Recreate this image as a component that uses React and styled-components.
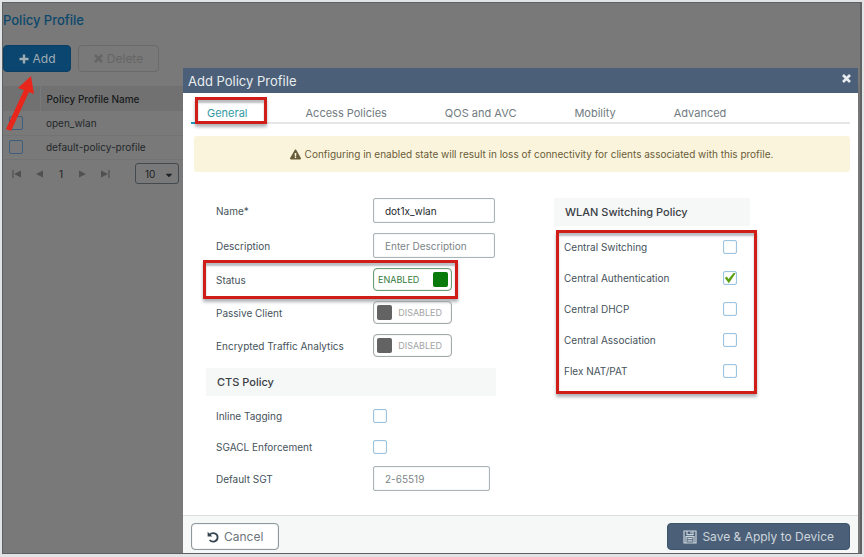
import React, { useState } from 'react'
import styled, { createGlobalStyle } from 'styled-components'
import { FaExclamationTriangle, FaCaretDown } from 'react-icons/fa'

const GlobalStyle = createGlobalStyle`
  * {
    box-sizing: border-box;
  }
  body {
    margin: 0;
    font-family: Inter, 'Liberation Sans', sans-serif;
    font-size: 10px;
    color: #45525a;
  }
  button, input, select {
    font-family: inherit;
    font-size: inherit;
    color: inherit;
  }
`

const Frame = styled.div`
  min-height: 100vh;
  padding: 2px 2px 3px 2px;
  background-color: #e2e3e4;
  display: flex;
`

const Screen = styled.div`
  position: relative;
  flex: 1;
  min-width: 0;
  border: 1px solid #5f6263;
  border-right-width: 2px;
  background-color: #797979;
`

const PageTitle = styled.h1`
  margin: 0;
  padding-top: 8px;
  font-size: 13px;
  font-weight: 500;
  line-height: 18px;
  color: #0c486c;
`

const Toolbar = styled.div`
  display: flex;
  gap: 7px;
  margin-top: 16px;
`

const ToolButton = styled.button`
  display: flex;
  align-items: center;
  justify-content: center;
  gap: 4px;
  height: 27px;
  width: ${props => props.$wide ? '81px' : '68px'};
  border: 1px solid ${props => props.$primary ? '#0b3f64' : '#6a6a6a'};
  border-radius: 4px;
  background-color: ${props => props.$primary ? '#0a4670' : 'transparent'};
  color: ${props => props.$primary ? '#a0acb3' : '#656565'};
  font-size: 12px;
  cursor: pointer;
`

const ProfileTable = styled.table`
  width: 100%;
  margin-top: 14px;
  border-collapse: collapse;
  color: #23282b;
`

const HeadCell = styled.th`
  height: 25px;
  padding: 0 6px;
  background-color: #717171;
  border-right: 1px solid #797979;
  font-weight: 500;
  text-align: left;
  color: #191b1c;
  width: ${props => props.$narrow ? '37px' : 'auto'};
`

const Cell = styled.td`
  height: 24px;
  padding: 0 6px;
  border-bottom: 1px solid #737373;
`

const Check = styled.input`
  appearance: none;
  display: block;
  flex: none;
  width: 14px;
  height: 14px;
  margin: 0;
  border: 1px solid ${props => props.$dim ? '#3d5e7c' : '#9cc3e0'};
  border-radius: 2px;
  background-color: ${props => props.$dim ? 'transparent' : '#fff'};
  box-shadow: ${props => props.$dim ? 'none' : 'inset 0 0 1px #9cc3e0'};
`

const Pager = styled.div`
  display: flex;
  align-items: center;
  height: 28px;
  padding-left: 3px;
  color: #1c2226;
`

const PagerButton = styled.button`
  display: flex;
  justify-content: center;
  padding: 0;
  width: 22px;
  border: 0;
  background: none;
  color: #515151;
`

const PageNumber = styled.span`
  width: 22px;
  text-align: center;
  line-height: 20px;
`

const SizeBox = styled.div`
  position: relative;
  margin-left: 19px;
  svg {
    position: absolute;
    right: 5px;
    top: 7px;
    pointer-events: none;
  }
`

const SizeSelect = styled.select`
  appearance: none;
  display: block;
  width: 44px;
  height: 21px;
  padding: 0 9px;
  border: 1px solid #43494d;
  border-radius: 3px;
  background: transparent;
`

const Pointer = styled.svg`
  position: absolute;
  left: 0;
  top: 70px;
`

const Dialog = styled.section`
  position: absolute;
  left: 180px;
  right: 2px;
  top: 65px;
  bottom: 0;
  display: flex;
  flex-direction: column;
  background-color: #fff;
`

const DialogHeader = styled.header`
  display: flex;
  align-items: center;
  justify-content: space-between;
  height: 25px;
  padding: 0 7px 0 5px;
  background-color: #4b6078;
  color: #e8ecef;
`

const DialogTitle = styled.h2`
  margin: 0;
  font-size: 13px;
  font-weight: 400;
`

const CloseButton = styled.button`
  display: flex;
  padding: 0 0 4px;
  border: 0;
  background: none;
  font-size: 11px;
`

const Tabs = styled.nav`
  display: flex;
  gap: 26px;
  height: 31px;
  margin: 0 8px;
  border-bottom: 2px solid #e4e6e7;
`

const Tab = styled.a`
  position: relative;
  display: flex;
  align-items: center;
  height: 31px;
  padding: 10px 16px 0;
  border-bottom: 2px solid ${props => props.$active ? '#1c9bc4' : 'transparent'};
  font-size: 11px;
  text-decoration: none;
  color: ${props => props.$active ? '#3299a5' : '#717b80'};
`

const Highlight = styled.span`
  position: absolute;
  inset: ${props => props.$inset};
  border: 3px solid #cf1e17;
  box-shadow: 0 3px 3px rgba(60, 70, 80, 0.4), inset 0 3px 2px rgba(60, 70, 80, 0.35);
  pointer-events: none;
`

const Warning = styled.p`
  display: flex;
  align-items: center;
  justify-content: center;
  gap: 4px;
  height: 36px;
  margin: 12px 8px 0 11px;
  padding-left: 19px;
  border-radius: 3px;
  background-color: #fbf4dd;
  color: #695c38;
`

const Body = styled.div`
  flex: 1;
  display: grid;
  grid-template-columns: minmax(0, 290fr) minmax(0, 196fr);
  column-gap: 58px;
  align-content: start;
  padding: 21px 16% 20px 23px;
`

const Row = styled.div`
  position: relative;
  display: flex;
  align-items: center;
  height: ${props => props.$height}px;
  padding-left: 10px;
`

const Label = styled.label`
  width: 157px;
  flex: none;
`

const Field = styled.input`
  flex: 1;
  min-width: 0;
  max-width: ${props => props.$short ? '117px' : '122px'};
  height: 25px;
  margin-right: 1px;
  padding: 0 11px;
  border: 1px solid #aab4b8;
  border-radius: 2px;
  background-color: #fff;
  box-shadow: inset 0 0 1px #aab4b8;
  color: #22282b;
  &::placeholder {
    color: #7b8589;
    opacity: 1;
  }
`

const SwitchBox = styled.span`
  display: flex;
  flex-direction: ${props => props.$on ? 'row-reverse' : 'row'};
  align-items: center;
  justify-content: space-between;
  width: 79px;
  height: 23px;
  padding: ${props => props.$on ? '0 3px 0 4px' : '0 9px 0 3px'};
  border: 1px solid ${props => props.$on ? '#6c9b74' : '#a3a8aa'};
  border-radius: 4px;
  box-shadow: inset 0 0 1px ${props => props.$on ? '#6c9b74' : '#a3a8aa'};
  font-size: 9px;
  color: ${props => props.$on ? '#357b3d' : '#a2a4a5'};
`

const SwitchKnob = styled.input`
  appearance: none;
  width: 15px;
  height: 15px;
  margin: 0;
  border-radius: 2px;
  background-color: ${props => props.checked ? '#087b0a' : '#636363'};
`

const SectionTitle = styled.h3`
  margin: ${props => props.$spaced ? '6px 0 4px' : '5px 0'};
  padding-left: 11px;
  background-color: #f6f7f7;
  font-size: 11px;
  font-weight: 500;
  line-height: 28px;
  color: #3a4145;
`

const PolicyList = styled.div`
  position: relative;
  padding: 0 13px 8px 0;
`

const PolicyRow = styled(Row)`
  justify-content: space-between;
`

const Tick = styled.span`
  position: relative;
  display: block;
  svg {
    position: absolute;
    left: 0;
    top: 0;
    pointer-events: none;
  }
`

const DialogFooter = styled.footer`
  display: flex;
  align-items: center;
  justify-content: space-between;
  height: 38px;
  padding: 4px 8px 0;
  border-top: 1px solid #dcdede;
  background-color: #f6f7f7;
`

const ActionButton = styled.button`
  display: flex;
  align-items: center;
  justify-content: center;
  gap: 5px;
  height: 27px;
  padding: 0 15px;
  border: 1px solid ${props => props.$primary ? '#40566d' : '#8d979c'};
  border-radius: 4px;
  background-color: ${props => props.$primary ? '#4b6078' : '#fff'};
  box-shadow: inset 0 0 1px ${props => props.$primary ? '#40566d' : '#8d979c'};
  color: ${props => props.$primary ? '#cdd5dc' : '#6b757b'};
  font-size: 12px;
`

const profiles = ['open_wlan', 'default-policy-profile']
const tabs = ['General', 'Access Policies', 'QOS and AVC', 'Mobility', 'Advanced']

const PlusIcon = () => (
  <svg width="10" height="10" viewBox="0 0 10 10" fill="none" stroke="currentColor" strokeWidth="2.4">
    <path d="M5 .5v9M.5 5h9" />
  </svg>
)

const CrossIcon = () => (
  <svg width="9" height="9" viewBox="0 0 9 9" fill="none" stroke="currentColor" strokeWidth="2.6">
    <path d="M1 1l7 7M8 1 1 8" />
  </svg>
)

const UndoIcon = () => (
  <svg width="12" height="12" viewBox="0 0 12 12" fill="none" stroke="#35444f" strokeWidth="1.8">
    <path d="M2.6 3.6C5.4.8 10.6 2 10.6 6.2c0 4.4-5 5.8-8 3" />
    <path d="M.6.8 5.4 5.4H.6Z" fill="#35444f" stroke="none" />
  </svg>
)

const PageArrow = ({ back, end }) => (
  <svg width="10" height="10" viewBox="0 0 10 10" fill="currentColor">
    <g transform={back ? 'matrix(-1 0 0 1 10 0)' : undefined}>
      <path d="M1 1.5 8 5 1 8.5Z" />
      {end && <path d="M8.4 1h1.2v8H8.4Z" />}
    </g>
  </svg>
)

const SaveIcon = () => (
  <svg width="14" height="14" viewBox="0 0 14 14" fill="none" stroke="currentColor" strokeWidth="1.2">
    <path d="M1 1h12v12H1Z" />
    <path d="M4 1v3.6h6V1M8 1.6v2" />
    <path d="M3 13V6.6h8V13M4.5 8.7h5M4.5 10.8h5" />
  </svg>
)

const PolicyCheck = ({ id, label, initial }) => {
  const [checked, setChecked] = useState(initial)
  return (
    <PolicyRow $height={31}>
      <label htmlFor={id}>{label}</label>
      <Tick>
        <Check id={id} type="checkbox" checked={checked} onChange={() => setChecked(!checked)} />
        {checked && (
          <svg width="14" height="14" viewBox="0 0 14 14">
            <path d="M1.8 7 3.8 5.6 5.5 8 10.8 1.8 12.6 2.2 5.9 12.2Z" fill="#5da016" />
          </svg>
        )}
      </Tick>
    </PolicyRow>
  )
}

const SwitchRow = ({ id, label, initial, marked }) => {
  const [on, setOn] = useState(initial)
  return (
    <Row $height={33}>
      <Label htmlFor={id}>{label}</Label>
      <SwitchBox $on={on}>
        <SwitchKnob id={id} type="checkbox" checked={on} onChange={() => setOn(!on)} />
        <span>{on ? 'ENABLED' : 'DISABLED'}</span>
      </SwitchBox>
      {marked && <Highlight $inset="-3px 38px -3px -3px" />}
    </Row>
  )
}

export default function App() {
  const [tab, setTab] = useState('General')
  return (
    <Frame>
      <GlobalStyle />
      <Screen>
        <PageTitle>Policy Profile</PageTitle>
        <Toolbar>
          <ToolButton $primary><PlusIcon />Add</ToolButton>
          <ToolButton $wide><CrossIcon />Delete</ToolButton>
        </Toolbar>
        <ProfileTable>
          <thead>
            <tr>
              <HeadCell $narrow />
              <HeadCell>Policy Profile Name</HeadCell>
            </tr>
          </thead>
          <tbody>
            {profiles.map(name => (
              <tr key={name}>
                <Cell><Check $dim type="checkbox" aria-label={name} /></Cell>
                <Cell>{name}</Cell>
              </tr>
            ))}
          </tbody>
        </ProfileTable>
        <Pager>
          <PagerButton aria-label="First page"><PageArrow back end /></PagerButton>
          <PagerButton aria-label="Previous page"><PageArrow back /></PagerButton>
          <PageNumber>1</PageNumber>
          <PagerButton aria-label="Next page"><PageArrow /></PagerButton>
          <PagerButton aria-label="Last page"><PageArrow end /></PagerButton>
          <SizeBox>
            <SizeSelect aria-label="Items per page" defaultValue="10">
              <option>10</option>
              <option>20</option>
            </SizeSelect>
            <FaCaretDown size={10} />
          </SizeBox>
        </Pager>
        <Pointer width="40" height="64" viewBox="0 0 40 64">
          <path d="M28 3 31 21 26 19 8 58 3 56 21 17 15 15Z" fill="#e9261b" />
        </Pointer>

        <Dialog role="dialog" aria-labelledby="dialog-title">
          <DialogHeader>
            <DialogTitle id="dialog-title">Add Policy Profile</DialogTitle>
            <CloseButton aria-label="Close"><CrossIcon /></CloseButton>
          </DialogHeader>
          <Tabs>
            {tabs.map(name => (
              <Tab key={name} href="#" $active={name === tab} onClick={() => setTab(name)}>
                {name}
                {name === 'General' && <Highlight $inset="4px -3px -2px 4px" />}
              </Tab>
            ))}
          </Tabs>
          <Warning>
            <FaExclamationTriangle size={11} />
            Configuring in enabled state will result in loss of connectivity for clients associated with this profile.
          </Warning>
          <Body>
            <div>
              <Row $height={35}>
                <Label htmlFor="name">Name*</Label>
                <Field id="name" defaultValue="dot1x_wlan" />
              </Row>
              <Row $height={35}>
                <Label htmlFor="description">Description</Label>
                <Field id="description" placeholder="Enter Description" />
              </Row>
              <SwitchRow id="status" label="Status" initial={true} marked />
              <SwitchRow id="passive" label="Passive Client" initial={false} />
              <SwitchRow id="eta" label="Encrypted Traffic Analytics" initial={false} />
              <SectionTitle $spaced>CTS Policy</SectionTitle>
              <Row $height={31}>
                <Label htmlFor="tagging">Inline Tagging</Label>
                <Check id="tagging" type="checkbox" />
              </Row>
              <Row $height={31}>
                <Label htmlFor="sgacl">SGACL Enforcement</Label>
                <Check id="sgacl" type="checkbox" />
              </Row>
              <Row $height={33}>
                <Label htmlFor="sgt">Default SGT</Label>
                <Field $short id="sgt" placeholder="2-65519" />
              </Row>
            </div>
            <div>
              <SectionTitle>WLAN Switching Policy</SectionTitle>
              <PolicyList>
                <PolicyCheck id="switching" label="Central Switching" initial={false} />
                <PolicyCheck id="auth" label="Central Authentication" initial={true} />
                <PolicyCheck id="dhcp" label="Central DHCP" initial={false} />
                <PolicyCheck id="association" label="Central Association" initial={false} />
                <PolicyCheck id="flex" label="Flex NAT/PAT" initial={false} />
                <Highlight $inset="-1px -7px 0 2px" />
              </PolicyList>
            </div>
          </Body>
          <DialogFooter>
            <ActionButton><UndoIcon />Cancel</ActionButton>
            <ActionButton $primary><SaveIcon />Save &amp; Apply to Device</ActionButton>
          </DialogFooter>
        </Dialog>
      </Screen>
    </Frame>
  )
}
